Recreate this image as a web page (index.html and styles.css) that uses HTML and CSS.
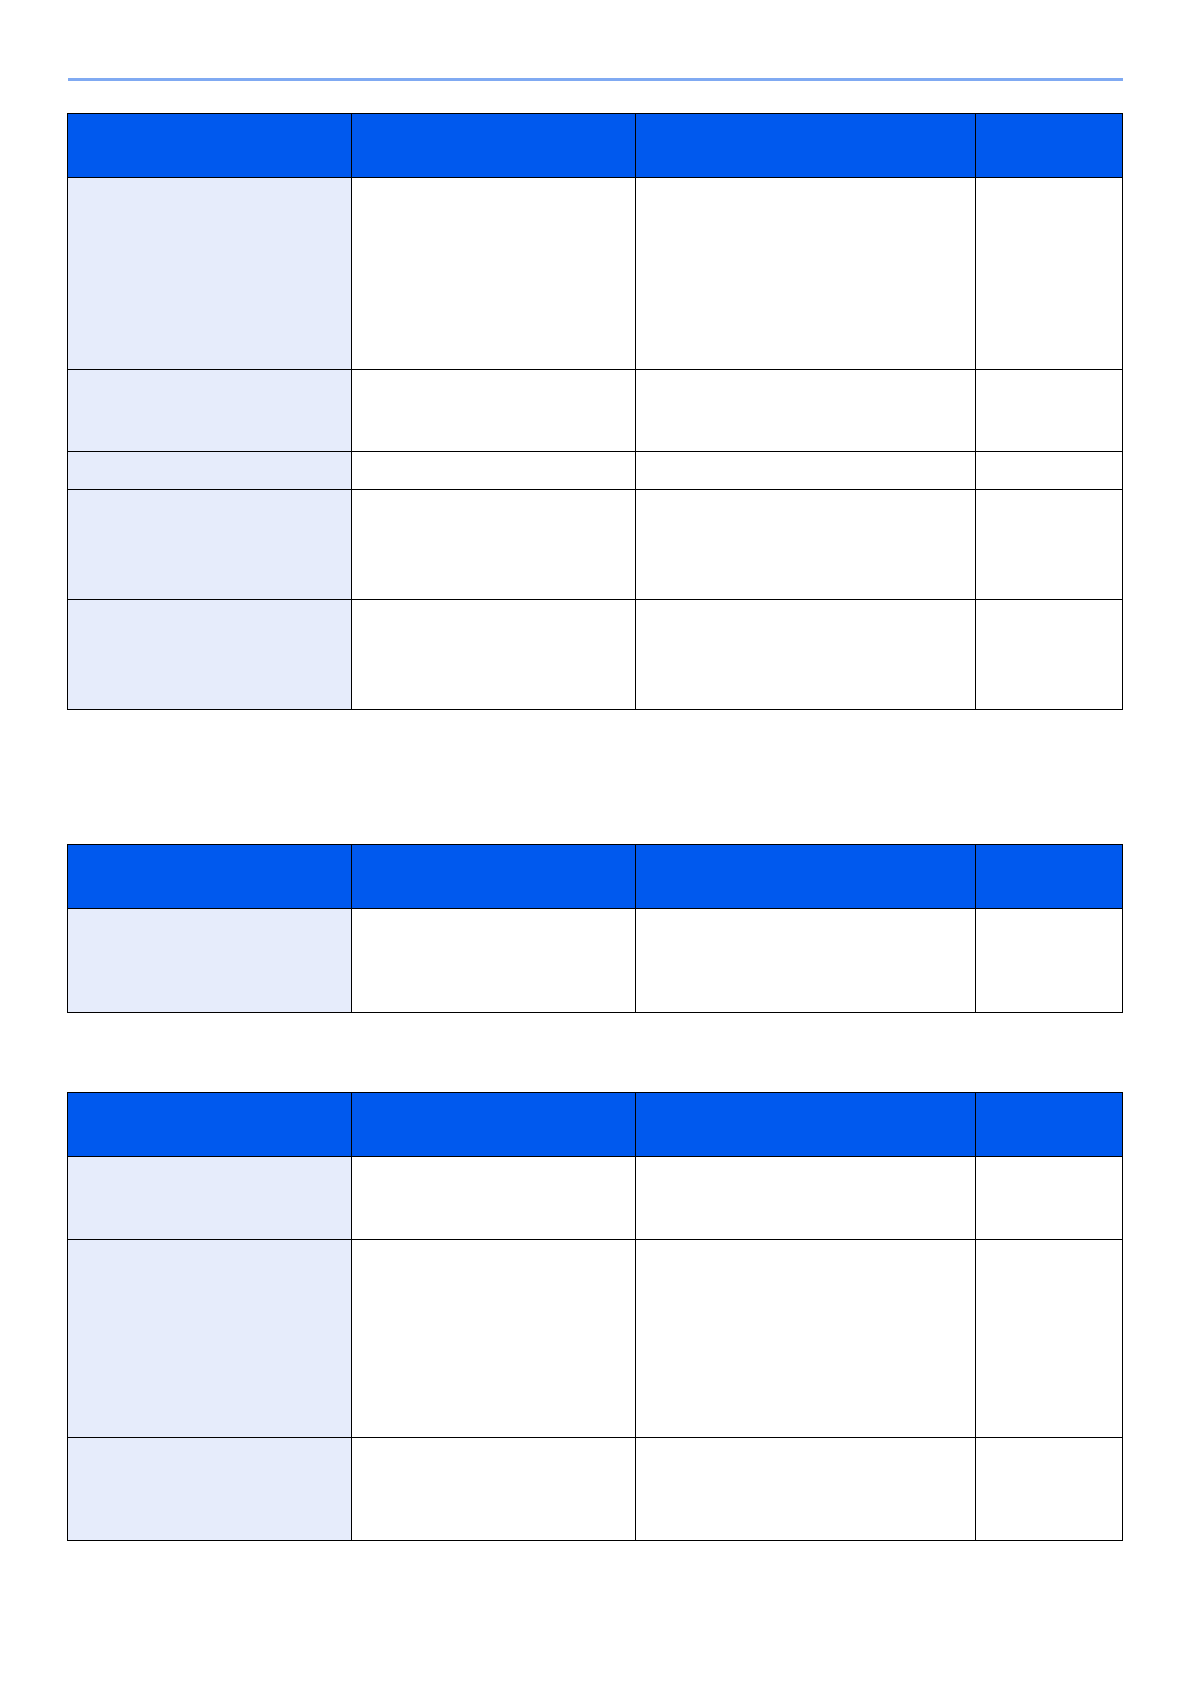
FILE: index.html
```html
<!DOCTYPE html>
<html lang="en">
<head>
<meta charset="utf-8">
<title>Tables</title>
<link rel="stylesheet" href="styles.css">
</head>
<body>
<div class="page">
  <div class="rule"></div>

  <div class="grid t1">
    <div class="cell head"></div><div class="cell head"></div><div class="cell head"></div><div class="cell head"></div>
    <div class="cell key h192"></div><div class="cell h192"></div><div class="cell h192"></div><div class="cell h192"></div>
    <div class="cell key h82"></div><div class="cell h82"></div><div class="cell h82"></div><div class="cell h82"></div>
    <div class="cell key h38"></div><div class="cell h38"></div><div class="cell h38"></div><div class="cell h38"></div>
    <div class="cell key h110"></div><div class="cell h110"></div><div class="cell h110"></div><div class="cell h110"></div>
    <div class="cell key h110"></div><div class="cell h110"></div><div class="cell h110"></div><div class="cell h110"></div>
  </div>

  <div class="grid t2">
    <div class="cell head"></div><div class="cell head"></div><div class="cell head"></div><div class="cell head"></div>
    <div class="cell key h104"></div><div class="cell h104"></div><div class="cell h104"></div><div class="cell h104"></div>
  </div>

  <div class="grid t3">
    <div class="cell head"></div><div class="cell head"></div><div class="cell head"></div><div class="cell head"></div>
    <div class="cell key h83"></div><div class="cell h83"></div><div class="cell h83"></div><div class="cell h83"></div>
    <div class="cell key h198"></div><div class="cell h198"></div><div class="cell h198"></div><div class="cell h198"></div>
    <div class="cell key h103"></div><div class="cell h103"></div><div class="cell h103"></div><div class="cell h103"></div>
  </div>
</div>
</body>
</html>
```

FILE: styles.css
```css
html, body {
  margin: 0;
  padding: 0;
  background: #ffffff;
  font-family: "Liberation Sans", Arial, sans-serif;
}

.page {
  padding: 78px 0 0 67px;
}

.rule {
  margin-left: 1px;
  width: 1055px;
  height: 3px;
  background: #80aaf2;
}

.grid {
  display: grid;
  grid-template-columns: 284px 284px 340px 147px;
  width: 1056px;
  box-sizing: border-box;
  border-top: 1px solid #000;
  border-left: 1px solid #000;
}

.t1 { margin-top: 32px; }
.t2 { margin-top: 134px; }
.t3 { margin-top: 79px; }

.cell {
  box-sizing: border-box;
  border-right: 1px solid #000;
  border-bottom: 1px solid #000;
  background: #ffffff;
}

.head {
  height: 64px;
  background: #0059ee;
}

.key { background: #e6ecfb; }

.h38 { height: 38px; }
.h82 { height: 82px; }
.h83 { height: 83px; }
.h103 { height: 103px; }
.h104 { height: 104px; }
.h110 { height: 110px; }
.h192 { height: 192px; }
.h198 { height: 198px; }
```
